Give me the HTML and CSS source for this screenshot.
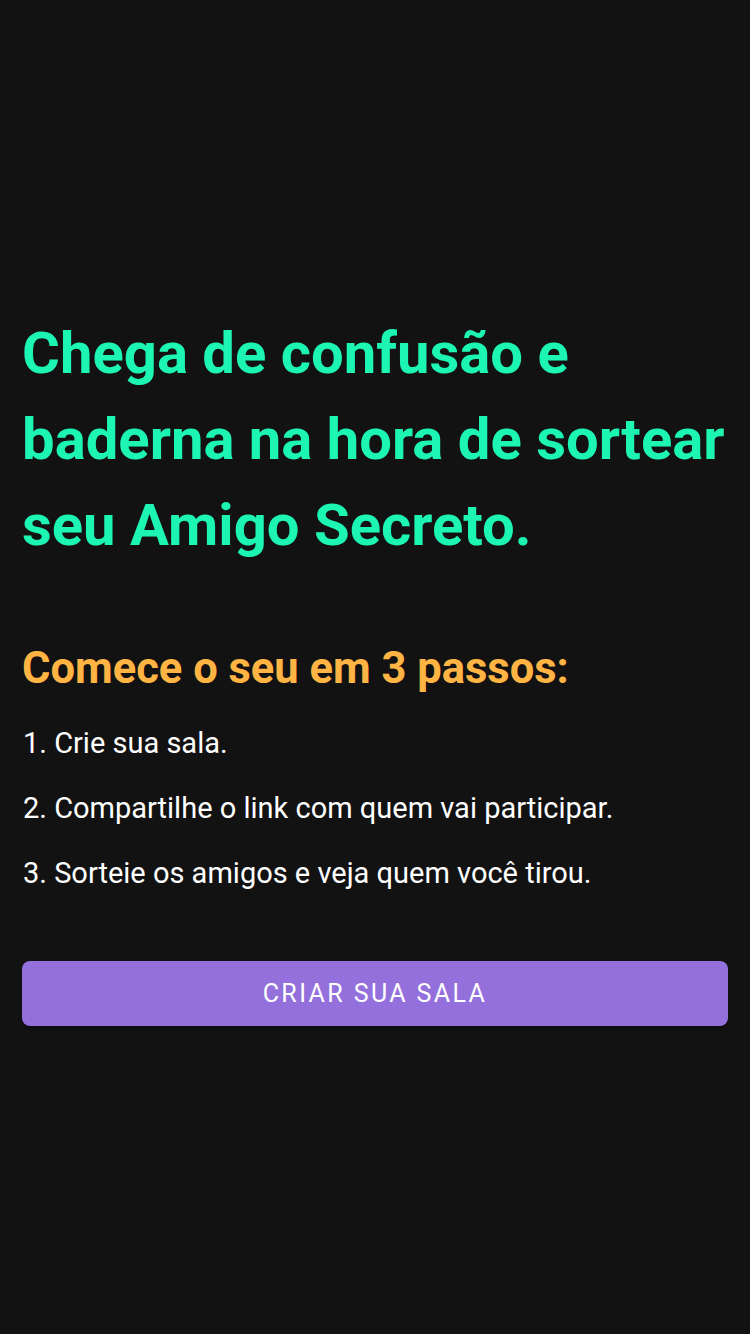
FILE: index.html
```html
<!DOCTYPE html>
<html lang="pt-BR">
<head>
<meta charset="utf-8">
<title>Amigo Secreto</title>
<link rel="stylesheet" href="styles.css">
</head>
<body>
<main class="page">
  <section class="content">
    <h1 class="title">Chega de confusão e baderna na hora de sortear seu Amigo Secreto.</h1>
    <h2 class="subtitle">Comece o seu em 3 passos:</h2>
    <ol class="steps">
      <li>1. Crie sua sala.</li>
      <li>2. Compartilhe o link com quem vai participar.</li>
      <li>3. Sorteie os amigos e veja quem você tirou.</li>
    </ol>
    <button class="cta" type="button">Criar sua sala</button>
  </section>
</main>
</body>
</html>
```

FILE: styles.css
```css
* { box-sizing: border-box; }
html, body {
  margin: 0;
  padding: 0;
  background: #121212;
}
body {
  font-family: Roboto, "Liberation Sans", sans-serif;
  color: #ffffff;
}
.page {
  min-height: 100vh;
  display: flex;
  flex-direction: column;
  justify-content: center;
  padding: 0 22px;
}
.content {
  display: flex;
  flex-direction: column;
  padding-top: 2px;
}
.title {
  margin: 0;
  font-size: 58px;
  font-weight: 700;
  line-height: 86px;
  color: #1df5b2;
}
.subtitle {
  margin: 73px 0 0;
  font-size: 43.5px;
  font-weight: 700;
  line-height: 56px;
  color: #ffb443;
}
.steps {
  list-style: none;
  margin: 29px 0 0;
  padding: 0 0 0 1px;
  display: flex;
  flex-direction: column;
  gap: 30px;
}
.steps li {
  font-size: 29px;
  line-height: 35px;
}
.cta {
  margin-top: 70px;
  height: 65px;
  border: none;
  border-radius: 8px;
  background: #9370db;
  color: #ffffff;
  font-family: Roboto, "Liberation Sans", sans-serif;
  font-size: 25px;
  font-weight: 400;
  letter-spacing: 2.4px;
  text-transform: uppercase;
  box-shadow: 0 3px 2px rgba(0,0,0,0.3);
}
```
